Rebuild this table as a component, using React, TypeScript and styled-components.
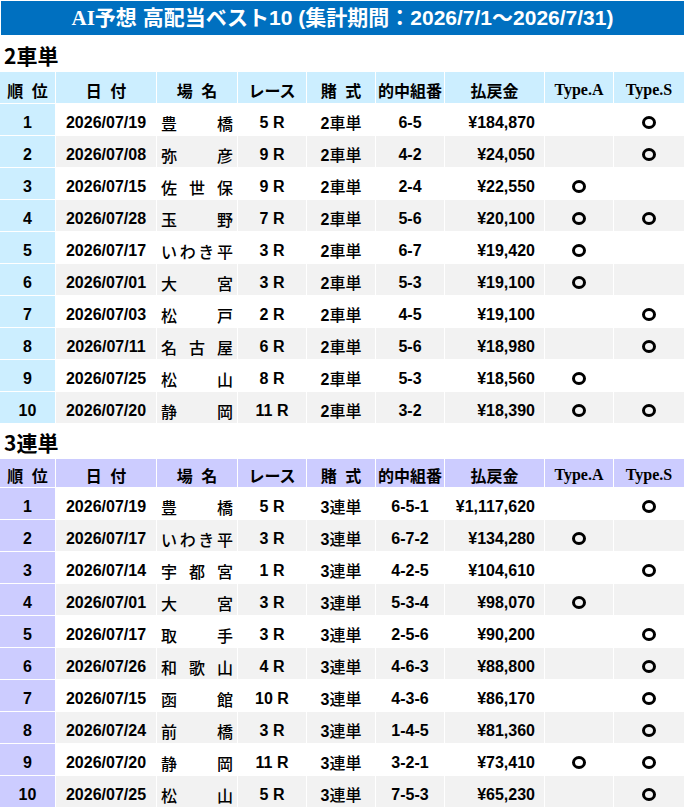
import React from "react";
import styled, { createGlobalStyle } from "styled-components";

const GlobalStyle = createGlobalStyle`
  html, body { margin: 0; padding: 0; background: #ffffff; }
  body {
    font-family: "Liberation Sans", "Noto Sans CJK JP", sans-serif;
    color: #000000;
    overflow-x: hidden;
  }
`;

type Row = {
  date: string;
  venue: string;
  race: string;
  combo: string;
  payout: string;
  a: boolean;
  s: boolean;
};

const exacta: Row[] = [
  { date: "2026/07/19", venue: "豊橋", race: "5 R", combo: "6-5", payout: "¥184,870", a: false, s: true },
  { date: "2026/07/08", venue: "弥彦", race: "9 R", combo: "4-2", payout: "¥24,050", a: false, s: true },
  { date: "2026/07/15", venue: "佐世保", race: "9 R", combo: "2-4", payout: "¥22,550", a: true, s: false },
  { date: "2026/07/28", venue: "玉野", race: "7 R", combo: "5-6", payout: "¥20,100", a: true, s: true },
  { date: "2026/07/17", venue: "いわき平", race: "3 R", combo: "6-7", payout: "¥19,420", a: true, s: false },
  { date: "2026/07/01", venue: "大宮", race: "3 R", combo: "5-3", payout: "¥19,100", a: true, s: false },
  { date: "2026/07/03", venue: "松戸", race: "2 R", combo: "4-5", payout: "¥19,100", a: false, s: true },
  { date: "2026/07/11", venue: "名古屋", race: "6 R", combo: "5-6", payout: "¥18,980", a: false, s: true },
  { date: "2026/07/25", venue: "松山", race: "8 R", combo: "5-3", payout: "¥18,560", a: true, s: false },
  { date: "2026/07/20", venue: "静岡", race: "11 R", combo: "3-2", payout: "¥18,390", a: true, s: true },
];

const trifecta: Row[] = [
  { date: "2026/07/19", venue: "豊橋", race: "5 R", combo: "6-5-1", payout: "¥1,117,620", a: false, s: true },
  { date: "2026/07/17", venue: "いわき平", race: "3 R", combo: "6-7-2", payout: "¥134,280", a: true, s: false },
  { date: "2026/07/14", venue: "宇都宮", race: "1 R", combo: "4-2-5", payout: "¥104,610", a: false, s: true },
  { date: "2026/07/01", venue: "大宮", race: "3 R", combo: "5-3-4", payout: "¥98,070", a: true, s: false },
  { date: "2026/07/17", venue: "取手", race: "3 R", combo: "2-5-6", payout: "¥90,200", a: false, s: true },
  { date: "2026/07/26", venue: "和歌山", race: "4 R", combo: "4-6-3", payout: "¥88,800", a: false, s: true },
  { date: "2026/07/15", venue: "函館", race: "10 R", combo: "4-3-6", payout: "¥86,170", a: false, s: true },
  { date: "2026/07/24", venue: "前橋", race: "3 R", combo: "1-4-5", payout: "¥81,360", a: false, s: true },
  { date: "2026/07/20", venue: "静岡", race: "11 R", combo: "3-2-1", payout: "¥73,410", a: true, s: true },
  { date: "2026/07/25", venue: "松山", race: "5 R", combo: "7-5-3", payout: "¥65,230", a: false, s: true },
];

const Page = styled.div`
  width: 684px;
  overflow: hidden;
`;

const TitleBar = styled.h1`
  margin: 1px 0 2px 1px;
  height: 34px;
  background: #0070c0;
  color: #ffffff;
  font-family: "Liberation Sans", "Noto Sans CJK JP", sans-serif;
  font-weight: bold;
  font-size: 21px;
  line-height: 34px;
  text-align: center;
  white-space: nowrap;
`;

const SerifText = styled.span`
  font-family: "Liberation Serif", serif;
`;

const Heading = styled.h2`
  margin: 0;
  height: 33px;
  padding: 1px 0 0 4px;
  font-family: "Noto Sans CJK JP", sans-serif;
  font-weight: bold;
  font-size: 21px;
  line-height: 34px;
`;

const Table = styled.table`
  table-layout: fixed;
  border-collapse: separate;
  border-spacing: 1px;
  width: 686px;
  margin-left: -1px;
`;

const HeadRow = styled.tr<{ $h: number }>`
  height: ${(p) => p.$h}px;
`;

const BodyRow = styled.tr`
  height: 31px;
`;

const HeadCell = styled.th<{ $bg: string }>`
  background: ${(p) => p.$bg};
  padding: 4px 0 0;
  font-family: "Noto Sans CJK JP", sans-serif;
  font-weight: bold;
  font-size: 16px;
  line-height: 20px;
  word-spacing: 5px;
  text-align: center;
  vertical-align: middle;
  white-space: nowrap;
  overflow: hidden;
`;

const TypeHeadCell = styled(HeadCell)`
  font-family: "Liberation Serif", serif;
`;

const Cell = styled.td<{ $alt: boolean }>`
  background: ${(p) => (p.$alt ? "#f2f2f2" : "#ffffff")};
  padding: 6px 0 0;
  font-family: "Liberation Sans", "Noto Sans CJK JP", sans-serif;
  font-weight: bold;
  font-size: 16px;
  line-height: 20px;
  text-align: center;
  vertical-align: middle;
  white-space: nowrap;
`;

const RankCell = styled.td<{ $bg: string }>`
  background: ${(p) => p.$bg};
  padding: 6px 0 0;
  font-family: "Liberation Sans", sans-serif;
  font-weight: bold;
  font-size: 16px;
  line-height: 20px;
  text-align: center;
  vertical-align: middle;
`;

const BetCell = styled(Cell)`
  font-family: "Noto Sans CJK JP", sans-serif;
  font-weight: 500;
`;

const BetDigit = styled.span`
  font-family: "Liberation Sans", sans-serif;
  font-weight: bold;
`;

const VenueCell = styled(Cell)`
  padding: 6px 4px 0;
  font-family: "Noto Sans CJK JP", sans-serif;
  font-weight: 500;
`;

const Spread = styled.span`
  display: flex;
  justify-content: space-between;
`;

const PayoutCell = styled(Cell)`
  text-align: right;
  padding-right: 9px;
`;

const Mark = styled.span`
  display: inline-block;
  box-sizing: border-box;
  width: 14px;
  height: 13px;
  border: 3px solid #000000;
  border-radius: 50%;
  vertical-align: -1px;
`;

const widths = [55, 100, 80, 68, 68, 68, 99, 68, 70];

function Section({
  title,
  bet,
  rows,
  accent,
  headHeight,
}: {
  title: string;
  bet: string;
  rows: Row[];
  accent: string;
  headHeight: number;
}) {
  return (
    <section>
      <Heading>{title}</Heading>
      <Table>
        <colgroup>
          {widths.map((w, i) => (
            <col key={i} style={{ width: w }} />
          ))}
        </colgroup>
        <thead>
          <HeadRow $h={headHeight}>
            <HeadCell $bg={accent}>順 位</HeadCell>
            <HeadCell $bg={accent}>日 付</HeadCell>
            <HeadCell $bg={accent}>場 名</HeadCell>
            <HeadCell $bg={accent}>レース</HeadCell>
            <HeadCell $bg={accent}>賭 式</HeadCell>
            <HeadCell $bg={accent}>的中組番</HeadCell>
            <HeadCell $bg={accent}>払戻金</HeadCell>
            <TypeHeadCell $bg={accent}>Type.A</TypeHeadCell>
            <TypeHeadCell $bg={accent}>Type.S</TypeHeadCell>
          </HeadRow>
        </thead>
        <tbody>
          {rows.map((r, i) => {
            const alt = i % 2 === 1;
            return (
              <BodyRow key={i}>
                <RankCell $bg={accent}>{i + 1}</RankCell>
                <Cell $alt={alt}>{r.date}</Cell>
                <VenueCell $alt={alt}>
                  <Spread>
                    {Array.from(r.venue).map((c, j) => (
                      <span key={j}>{c}</span>
                    ))}
                  </Spread>
                </VenueCell>
                <Cell $alt={alt}>{r.race}</Cell>
                <BetCell $alt={alt}>
                  <BetDigit>{bet.charAt(0)}</BetDigit>
                  {bet.slice(1)}
                </BetCell>
                <Cell $alt={alt}>{r.combo}</Cell>
                <PayoutCell $alt={alt}>{r.payout}</PayoutCell>
                <Cell $alt={alt}>{r.a && <Mark aria-label="○" />}</Cell>
                <Cell $alt={alt}>{r.s && <Mark aria-label="○" />}</Cell>
              </BodyRow>
            );
          })}
        </tbody>
      </Table>
    </section>
  );
}

export default function App() {
  return (
    <Page>
      <GlobalStyle />
      <TitleBar>
        <SerifText>AI</SerifText>予想 高配当ベスト10 (集計期間：2026/7/1～2026/7/31)
      </TitleBar>
      <Section title="2車単" bet="2車単" rows={exacta} accent="#cceeff" headHeight={31} />
      <Section title="3連単" bet="3連単" rows={trifecta} accent="#ccccff" headHeight={28} />
    </Page>
  );
}
